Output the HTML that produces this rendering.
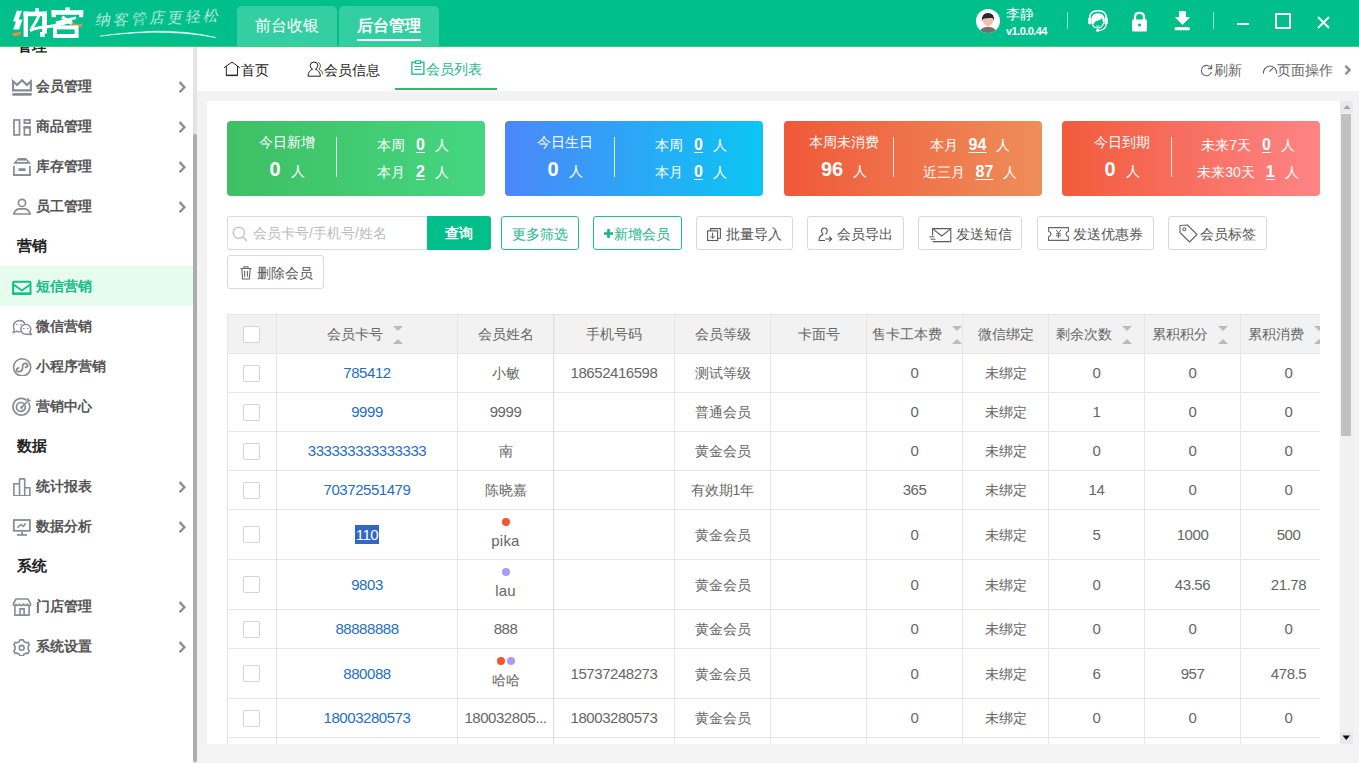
<!DOCTYPE html>
<html><head><meta charset="utf-8">
<style>
*{margin:0;padding:0;box-sizing:border-box}
html,body{width:1359px;height:763px;overflow:hidden;background:#f3f3f3;font-family:"Liberation Sans",sans-serif;font-size:14px;color:#666}
.a{position:absolute;white-space:nowrap}
#hdr{position:absolute;left:0;top:0;width:1359px;height:47px;background:#00bf8a;border-bottom:1px solid #3ccf6c}
.htab{position:absolute;top:6px;width:100px;height:40px;background:#33cfa2;border-radius:5px 5px 0 0;color:#fff;font-size:16px;line-height:40px;text-align:center}
#side{position:absolute;left:0;top:47px;width:193px;height:716px;background:#fff;overflow:hidden}
.sec{position:absolute;left:17px;font-size:15px;font-weight:bold;color:#222;line-height:20px}
.mi{position:absolute;left:0;width:193px;height:40px}
.mi .t{position:absolute;left:36px;top:0;line-height:40px;font-weight:bold;color:#555;font-size:14px}
.mi svg.ic{position:absolute;left:12px;top:10px}
.mi svg.ch{position:absolute;left:178px;top:15px}
#sbtrack{position:absolute;left:193px;top:47px;width:4px;height:716px;background:#e3e3e3}
#sbthumb{position:absolute;left:193px;top:134px;width:4px;height:628px;background:#adadad;border-radius:2px}
#tabbar{position:absolute;left:197px;top:47px;width:1162px;height:44px;background:#fff}
#panel{position:absolute;left:207px;top:101px;width:1146px;height:643px;background:#fff;overflow:hidden}
.card{position:absolute;top:20px;width:258px;height:75px;border-radius:4px;color:#fff}
.card .tt{position:absolute;top:13px;line-height:16px;font-size:14px;text-align:center}
.card .big{position:absolute;top:37px;line-height:22px;text-align:center}
.card .big b{font-size:20px}
.card .div{position:absolute;left:109px;top:16px;width:1px;height:40px;background:rgba(255,255,255,.85)}
.card .r{position:absolute;line-height:16px;font-size:14px}
.card u{text-underline-offset:2px;font-weight:bold}
.btn{position:absolute;top:115px;height:34px;border:1px solid #d9d9d9;border-radius:3px;background:#fff;color:#555;line-height:32px;font-size:14px}
.btn svg{position:absolute}
.btn span{position:absolute;top:1px}
.gbtn{border-color:#20c08d;color:#19b88a}

.tc{text-align:center;line-height:20px;font-size:14px;white-space:nowrap;overflow:hidden}
.num{font-size:15px;letter-spacing:-0.45px}
.sort{display:inline-block;position:relative;width:10px;height:20px;margin-left:10px;vertical-align:top}
.sort i{position:absolute;left:0;width:0;height:0;border-left:5px solid transparent;border-right:5px solid transparent}
.sort i.dn{top:3px;border-top:5px solid #bbb}
.sort i.up{top:11px;border-bottom:5px solid #bbb}
.dot{display:inline-block;width:8px;height:8px;border-radius:50%;margin:0 1px;vertical-align:top}
.card .r u{display:inline-block;margin:0 10px 0 11px;font-size:16px;text-decoration:underline}
.card .ren{display:inline-block;margin-left:10px;font-size:14px}
</style></head><body>
<div id="hdr">
  
  <svg class="a" style="left:0;top:0" width="95" height="46" viewBox="0 0 95 46">
  <path d="M16.8 10.8 L22 10.8 L18.6 19.4 L22.4 19.4 L19.2 29.4 L13.2 29.4 L16 21.6 L13 21.6 Z" fill="#fff"/>
  <path d="M12.2 33.2 L17 32.5 L21.6 31.8 L20 35 L13.5 36.4 Z" fill="#f0893d"/>
  <rect x="23.6" y="11.6" width="4.4" height="25.4" fill="#fff"/>
  <rect x="23.6" y="11.6" width="23.4" height="4.6" fill="#fff"/>
  <rect x="42.2" y="11.6" width="4.8" height="22" fill="#fff"/>
  <path d="M35.4 8 L39 8 L38.6 16 L35 16 Z" fill="#fff"/>
  <path d="M37.6 15 L33.6 23 L30.4 27.6 L33 29 L37.4 22 L40 16.4 Z" fill="#fff"/>
  <path d="M30 30.5 Q36 27.5 46 27 Q58 25.5 72 20.8" fill="none" stroke="#fff" stroke-width="3.2"/>
  <rect x="40" y="32" width="4.6" height="5" fill="#fff"/>
  <rect x="51.6" y="10.2" width="31.6" height="4.6" fill="#fff"/>
  <rect x="51.6" y="10.2" width="4.2" height="7" fill="#fff"/>
  <rect x="79" y="10.2" width="4.2" height="7" fill="#fff"/>
  <rect x="65.4" y="7.4" width="4.4" height="4" fill="#fff"/>
  <path d="M55.4 21.4 L75.6 16.4 L76.4 19 L56.8 24 Z" fill="#fff"/>
  <path d="M62 17 L72 23.6" fill="none" stroke="#fff" stroke-width="3.4"/>
  <path d="M71 22.2 L78 24.4 L83 23.6 L81.6 26.8 L73.6 25.8 Z" fill="#f0893d"/>
  <rect x="55" y="27.4" width="21.6" height="8.6" fill="none" stroke="#fff" stroke-width="4"/>
</svg>
  <div class="a" style="left:96px;top:8px;font-size:15px;line-height:20px;color:#fff;letter-spacing:3px;transform:skewX(-12deg) rotate(-2deg);-webkit-text-stroke:0.3px #00bf8a">纳客管店更轻松</div>
  <svg class="a" style="left:98px;top:28px" width="125" height="12" viewBox="0 0 125 12"><path d="M2 8.2 Q20 5 55 3.2 Q90 2.5 118 9.6 Q90 4.2 55 4.2 Q25 5 2 8.2 Z" fill="#fff" stroke="#fff" stroke-width="0.5"/></svg>
  <svg class="a" style="left:976px;top:9px" width="24" height="24" viewBox="0 0 24 24"><defs><clipPath id="avc"><circle cx="12" cy="12" r="12"/></clipPath></defs><circle cx="12" cy="12" r="12" fill="#fff"/><g clip-path="url(#avc)"><path d="M3.5 24 Q4.2 18.6 10.5 18 L13.5 18 Q19.8 18.6 20.5 24 Z" fill="#707070"/><path d="M7 11.5 Q7 8.5 12 8.5 Q17 8.5 17 11.5 Q17 15.5 12 17.8 Q7 15.5 7 11.5 Z" fill="#f2c0ad"/><path d="M5.9 12.2 Q5.2 4 12 3.9 Q18.8 4 17.9 12 Q17.2 9.2 16 9 Q12 8.6 8.2 9.6 Q6.8 10 5.9 12.2 Z" fill="#2a2a2a"/></g></svg>
  <div class="a" style="left:1006px;top:5px;font-size:14px;line-height:18px;color:#fff">李静</div>
  <div class="a" style="left:1006px;top:24px;font-size:11px;line-height:14px;color:#fff;font-weight:bold;letter-spacing:-0.55px">v1.0.0.44</div>
  <div class="a" style="left:1067px;top:12px;width:1px;height:17px;background:rgba(255,255,255,.55)"></div>
  <svg class="a" style="left:1087px;top:10px" width="22" height="22" viewBox="0 0 22 22"><path d="M2.6 8.5 Q2.6 0.8 11 0.8 Q19.4 0.8 19.4 8.5" fill="none" stroke="#fff" stroke-width="1.5"/><rect x="1.2" y="7.6" width="3.4" height="6.6" rx="1" fill="#fff"/><rect x="17.4" y="7.6" width="3.4" height="6.6" rx="1" fill="#fff"/><path d="M4.6 13.5 L4.6 9.5 Q4.6 3.2 11 3.2 Q17.4 3.2 17.4 9.5 L17.4 12.5 L16 12.5 Q15.6 9.8 14.6 8 Q13.8 10 11 10.6 Q7.6 11.2 6.6 14.2 Z" fill="#fff"/><path d="M5.2 14 Q6.5 17.8 11 18 Q15 17.8 16.6 13" fill="none" stroke="#fff" stroke-width="1.1"/><path d="M9.3 15.8 Q10.8 16.6 12.4 15.8" fill="none" stroke="#fff" stroke-width="0.9"/><path d="M19.2 14 Q18.8 20.3 11.5 20.4" fill="none" stroke="#fff" stroke-width="1.3"/><circle cx="10.6" cy="20.3" r="1.6" fill="#fff"/></svg>
  <svg class="a" style="left:1131px;top:11px" width="17" height="21" viewBox="0 0 17 21"><path d="M4 9 L4 6 Q4 1.8 8.5 1.8 Q13 1.8 13 6 L13 9" fill="none" stroke="#fff" stroke-width="2.3"/><rect x="1" y="8.5" width="15" height="12" rx="1.3" fill="#fff"/><circle cx="8.5" cy="14" r="1.6" fill="#00bf8a"/></svg>
  <svg class="a" style="left:1174px;top:11px" width="17" height="20" viewBox="0 0 17 20"><path d="M5.5 0.5 L11.5 0.5 L11.5 6.5 L15.5 6.5 L8.5 13.5 L1.5 6.5 L5.5 6.5 Z" fill="#fff" stroke="#fff" stroke-width="0.8" stroke-linejoin="round"/><rect x="0.5" y="16.2" width="15.5" height="3" rx="1.4" fill="#fff"/></svg>
  <div class="a" style="left:1213px;top:12px;width:1px;height:17px;background:rgba(255,255,255,.55)"></div>
  <div class="a" style="left:1237px;top:23px;width:12px;height:2px;background:#fff"></div>
  <div class="a" style="left:1275px;top:13px;width:16px;height:16px;border:2px solid #fff"></div>
  <svg class="a" style="left:1317px;top:16px" width="13" height="13" viewBox="0 0 13 13"><path d="M1 1 L12 12 M12 1 L1 12" stroke="#fff" stroke-width="1.9"/></svg>
  <div class="htab" style="left:237px">前台收银</div>
  <div class="htab" style="left:339px;font-weight:bold">后台管理<div style="position:absolute;left:18px;top:33px;width:64px;height:2px;background:#fff"></div></div>
</div>
<div id="side">
<div class="sec" style="top:-11px">管理</div>
<div class="mi" style="top:19px"><svg class="ic" width="20" height="20" viewBox="0 0 20 20"><path d="M1.1 5.3 L5.1 9 L10 4.2 L14.9 9 L18.9 5.3 L18.9 14.4 L1.1 14.4 Z" fill="none" stroke="#8a8a97" stroke-width="2.1" stroke-linejoin="miter"/><rect x="0.1" y="17.1" width="19.8" height="2.7" rx="1.35" fill="#8a8a97"/></svg><div class="t">会员管理</div><svg class="ch" width="9" height="12" viewBox="0 0 9 12"><path d="M1.6 1.1 L6.4 6.2 L1.6 11.2" fill="none" stroke="#8a8a97" stroke-width="2.3"/></svg></div>
<div class="mi" style="top:59px"><svg class="ic" width="20" height="20" viewBox="0 0 20 20"><rect x="1.95" y="3.95" width="5.6" height="15" fill="none" stroke="#8a8a97" stroke-width="1.7"/><rect x="12.35" y="3.95" width="5.6" height="3.2" fill="none" stroke="#8a8a97" stroke-width="1.8"/><rect x="12.35" y="11.3" width="5.6" height="7.65" fill="none" stroke="#8a8a97" stroke-width="1.7"/><rect x="11.5" y="10.1" width="7.3" height="2.4" fill="#8a8a97"/></svg><div class="t">商品管理</div><svg class="ch" width="9" height="12" viewBox="0 0 9 12"><path d="M1.6 1.1 L6.4 6.2 L1.6 11.2" fill="none" stroke="#8a8a97" stroke-width="2.3"/></svg></div>
<div class="mi" style="top:99px"><svg class="ic" width="20" height="20" viewBox="0 0 20 20"><path d="M6.3 2 L14 2 L19 7.8 L1 7.8 Z" fill="#8a8a97"/><rect x="4.8" y="4.6" width="10.3" height="1.3" fill="#fff"/><path d="M1.9 10.1 L1.9 19.45 L17.9 19.45 L17.9 10.1" fill="none" stroke="#8a8a97" stroke-width="1.7"/><rect x="1" y="18.2" width="17.8" height="2.5" fill="#8a8a97"/><path d="M6.1 13.55 L7 12.2 L13.1 12.2 L14 13.55 L13.1 14.9 L7 14.9 Z" fill="#8a8a97"/></svg><div class="t">库存管理</div><svg class="ch" width="9" height="12" viewBox="0 0 9 12"><path d="M1.6 1.1 L6.4 6.2 L1.6 11.2" fill="none" stroke="#8a8a97" stroke-width="2.3"/></svg></div>
<div class="mi" style="top:139px"><svg class="ic" width="20" height="20" viewBox="0 0 20 20"><circle cx="10" cy="6.9" r="3.6" fill="none" stroke="#8a8a97" stroke-width="1.7"/><path d="M6.4 12.9 L13.6 12.9 Q15.6 13.3 16.8 15.2 L18.3 18 L1.7 18 L3.2 15.2 Q4.4 13.3 6.4 12.9 Z" fill="none" stroke="#8a8a97" stroke-width="1.7" stroke-linejoin="round"/></svg><div class="t">员工管理</div><svg class="ch" width="9" height="12" viewBox="0 0 9 12"><path d="M1.6 1.1 L6.4 6.2 L1.6 11.2" fill="none" stroke="#8a8a97" stroke-width="2.3"/></svg></div>
<div class="sec" style="top:189px">营销</div>
<div class="mi" style="top:219px;background:#e6fcee"><svg class="ic" width="20" height="20" viewBox="0 0 20 20"><rect x="1.1" y="5.7" width="17.4" height="12.1" rx="0.8" fill="none" stroke="#0fbf87" stroke-width="1.9"/><rect x="0.1" y="16.6" width="19.4" height="2.2" rx="0.8" fill="#0fbf87"/><path d="M1.4 8.6 L9.9 14.4 L18.4 8.6" fill="none" stroke="#0fbf87" stroke-width="1.8"/></svg><div class="t" style="color:#12bd86">短信营销</div></div>
<div class="mi" style="top:259px"><svg class="ic" width="20" height="20" viewBox="0 0 20 20"><path d="M12.9 7.6 A6.1 5.9 0 0 0 1.5 10 Q1.5 12.5 2.2 13.6 L1.2 16.7 L4.3 15.3 Q6 15.9 8.2 15.6" fill="none" stroke="#8a8a97" stroke-width="1.45" stroke-linejoin="round"/><rect x="4" y="7.9" width="1.5" height="1" fill="#8a8a97"/><rect x="8" y="7.9" width="1.5" height="1" fill="#8a8a97"/><path d="M17.8 16.2 A4.95 4.95 0 1 0 14.3 18.2 L19.5 18.5 Z" fill="none" stroke="#8a8a97" stroke-width="1.45" stroke-linejoin="round"/><rect x="11" y="12" width="1.5" height="1" fill="#8a8a97"/><rect x="15" y="12" width="1.5" height="1" fill="#8a8a97"/></svg><div class="t">微信营销</div></div>
<div class="mi" style="top:299px"><svg class="ic" width="20" height="20" viewBox="0 0 20 20"><circle cx="10.15" cy="11.3" r="8.6" fill="none" stroke="#8a8a97" stroke-width="1.6"/><path d="M7.3 11.6 C5.4 12 4.6 13 4.6 14 C4.7 15.2 5.7 15.7 6.8 15.7 C8.9 15.7 10.3 14.6 10.5 12.5 L10.6 10 C10.8 8 12 7.3 13.2 7.3 C14.6 7.3 15.6 8.2 15.6 9.4 C15.6 10.5 14.6 11.3 12.8 11.4" fill="none" stroke="#8a8a97" stroke-width="1.8"/></svg><div class="t">小程序营销</div></div>
<div class="mi" style="top:339px"><svg class="ic" width="20" height="20" viewBox="0 0 20 20"><path d="M14.8 4.4 A8.35 8.35 0 1 0 16.6 6.6" fill="none" stroke="#8a8a97" stroke-width="1.7"/><path d="M12.4 8.3 A4.45 4.45 0 1 0 13 9.4" fill="none" stroke="#8a8a97" stroke-width="1.7"/><rect x="8.3" y="10.2" width="2.6" height="2.5" fill="#8a8a97"/><path d="M9.6 11.4 L16.8 4.2" stroke="#8a8a97" stroke-width="1.6"/><path d="M15.8 2 L16.2 4.4 L18.6 4.6" fill="none" stroke="#8a8a97" stroke-width="1.6"/></svg><div class="t">营销中心</div></div>
<div class="sec" style="top:389px">数据</div>
<div class="mi" style="top:419px"><svg class="ic" width="20" height="20" viewBox="0 0 20 20"><path d="M1.9 19.9 L1.9 7.8 L7.5 7.8 M7.5 19.9 L7.5 3.4 Q7.5 2.9 8.2 2.9 L12 2.9 Q12.7 2.9 12.7 3.4 L12.7 19.9 M12.7 11.7 L17.9 11.7 L17.9 19.9" fill="none" stroke="#8a8a97" stroke-width="1.6"/><rect x="1.1" y="19" width="17.6" height="1.7" rx="0.5" fill="#8a8a97"/></svg><div class="t">统计报表</div><svg class="ch" width="9" height="12" viewBox="0 0 9 12"><path d="M1.6 1.1 L6.4 6.2 L1.6 11.2" fill="none" stroke="#8a8a97" stroke-width="2.3"/></svg></div>
<div class="mi" style="top:459px"><svg class="ic" width="20" height="20" viewBox="0 0 20 20"><rect x="1.8" y="4" width="16.1" height="10.8" fill="none" stroke="#8a8a97" stroke-width="1.8"/><rect x="9.2" y="15.5" width="1.8" height="2.8" fill="#8a8a97"/><rect x="4.9" y="18.1" width="10.2" height="1.7" fill="#8a8a97"/><path d="M5.4 11.6 L9 8.5 L11.3 10.5 L13.7 7.2" fill="none" stroke="#8a8a97" stroke-width="1.5"/></svg><div class="t">数据分析</div><svg class="ch" width="9" height="12" viewBox="0 0 9 12"><path d="M1.6 1.1 L6.4 6.2 L1.6 11.2" fill="none" stroke="#8a8a97" stroke-width="2.3"/></svg></div>
<div class="sec" style="top:509px">系统</div>
<div class="mi" style="top:539px"><svg class="ic" width="20" height="20" viewBox="0 0 20 20"><path d="M4 3 L16.1 3 L18.6 8.2 Q18.6 9.6 17 9.6 Q15.6 9.6 15.3 8 Q14.6 9.8 13 9.4 Q12 9 11.6 8 Q10.6 9.8 8.4 9.4 Q7.6 9 7.4 8 Q6.8 9.6 5 9.5 Q4.2 9.2 4 8.2 Q3.4 9.6 2.2 9.4 Q1.3 9.2 1.3 8 Z" fill="none" stroke="#8a8a97" stroke-width="1.6" stroke-linejoin="round"/><path d="M2.9 9.6 L2.9 19.1 L17.1 19.1 L17.1 9.6" fill="none" stroke="#8a8a97" stroke-width="1.6"/><path d="M8 19 L8 12.9 L12.1 12.9 L12.1 19" fill="none" stroke="#8a8a97" stroke-width="1.6"/></svg><div class="t">门店管理</div><svg class="ch" width="9" height="12" viewBox="0 0 9 12"><path d="M1.6 1.1 L6.4 6.2 L1.6 11.2" fill="none" stroke="#8a8a97" stroke-width="2.3"/></svg></div>
<div class="mi" style="top:579px"><svg class="ic" width="20" height="20" viewBox="0 0 20 20"><path d="M8 3.9 L11.2 3.9 L12 5.6 L14 6.7 L16.1 6.4 L17.3 8.6 L16.2 10.3 L16.2 13.5 L17.3 15.2 L16.1 17.4 L14 17.1 L12 18.2 L11.2 19.9 L8 19.9 L7.2 18.2 L5.2 17.1 L3.1 17.4 L1.9 15.2 L3 13.5 L3 10.3 L1.9 8.6 L3.1 6.4 L5.2 6.7 L7.2 5.6 Z" fill="none" stroke="#8a8a97" stroke-width="1.6" stroke-linejoin="round"/><circle cx="9.7" cy="11.8" r="2.4" fill="none" stroke="#8a8a97" stroke-width="1.6"/></svg><div class="t">系统设置</div><svg class="ch" width="9" height="12" viewBox="0 0 9 12"><path d="M1.6 1.1 L6.4 6.2 L1.6 11.2" fill="none" stroke="#8a8a97" stroke-width="2.3"/></svg></div>
</div>
<div id="sbtrack"></div><div id="sbthumb"></div>
<div id="tabbar">
  <svg class="a" style="left:26px;top:14px" width="18" height="16" viewBox="0 0 18 16"><path d="M1 6.8 L9 1 L16.8 6.8" fill="none" stroke="#222" stroke-width="1"/><path d="M3.3 5.2 L3.3 14.4 L14.5 14.4 L14.5 5.2" fill="none" stroke="#222" stroke-width="1"/><path d="M3.3 14.4 L14.5 14.4" stroke="#222" stroke-width="1.4"/></svg>
  <div class="a" style="left:44px;top:15px;line-height:16px;color:#222">首页</div>
  <svg class="a" style="left:110px;top:14px" width="17" height="16" viewBox="0 0 17 16"><path d="M5.6 8.2 Q3.2 7 3.2 4.6 Q3.2 1 7 1 Q10.8 1 10.8 4.6 Q10.8 7 8.4 8.2 Q13 9.8 13.4 15.2 L1 15.2 Q1.2 9.8 5.6 8.2 Z" fill="none" stroke="#222" stroke-width="1"/><path d="M11.2 1.2 Q13.6 2.4 13.4 5.2 Q13.2 7.2 12 8.2 Q15.4 9.6 16 13.4" fill="none" stroke="#444" stroke-width="0.9"/></svg>
  <div class="a" style="left:127px;top:15px;line-height:16px;color:#222">会员信息</div>
  <svg class="a" style="left:214px;top:13px" width="14" height="15" viewBox="0 0 14 15"><rect x="0.9" y="2.2" width="12" height="12" fill="none" stroke="#18bb8a" stroke-width="1.3"/><rect x="4.5" y="0.8" width="5" height="2.6" fill="#fff" stroke="#18bb8a" stroke-width="1.1"/><path d="M3.6 6.5 L10.2 6.5 M3.6 9.5 L10.2 9.5" stroke="#18bb8a" stroke-width="1.1"/></svg>
  <div class="a" style="left:229px;top:14px;line-height:16px;color:#18bb8a">会员列表</div>
  <div class="a" style="left:198px;top:41px;width:102px;height:2px;background:#2fbd5c"></div>
  <svg class="a" style="left:1003px;top:17px" width="13" height="13" viewBox="0 0 13 13"><path d="M11.2 4.2 A5.2 5.2 0 1 0 11.5 8.2" fill="none" stroke="#666" stroke-width="1.1"/><path d="M11.6 0.8 L11.6 4.6 L7.8 4.6" fill="none" stroke="#666" stroke-width="1.1"/></svg>
  <div class="a" style="left:1017px;top:15px;line-height:16px;color:#666">刷新</div>
  <svg class="a" style="left:1065px;top:16px" width="16" height="13" viewBox="0 0 16 13"><path d="M1.6 10.6 A6.5 6.5 0 1 1 14.4 10.6" fill="none" stroke="#555" stroke-width="1.05"/><path d="M7.4 8.6 L10.9 5.2" stroke="#555" stroke-width="1.1"/></svg>
  <div class="a" style="left:1080px;top:15px;line-height:16px;color:#666">页面操作</div>
  <svg class="a" style="left:1147px;top:18px" width="9" height="11" viewBox="0 0 9 11"><path d="M1.4 0.9 L5.6 5.1 L1.4 9.3" fill="none" stroke="#8a8a97" stroke-width="2.3"/></svg>
</div>
<div id="panel">
<div class="card" style="left:20px;background:linear-gradient(90deg,#3ebf63,#45d681)"><div class="tt" style="left:0;width:119px">今日新增</div><div class="big" style="left:0;width:120px"><b>0</b><span class="ren">人</span></div><div class="div"></div><div class="r" style="left:110px;width:152px;top:16px;text-align:center">本周<u>0</u>人</div><div class="r" style="left:110px;width:152px;top:43px;text-align:center">本月<u>2</u>人</div></div>
<div class="card" style="left:298px;background:linear-gradient(90deg,#4c87f9,#0bc6f3)"><div class="tt" style="left:0;width:119px">今日生日</div><div class="big" style="left:0;width:120px"><b>0</b><span class="ren">人</span></div><div class="div"></div><div class="r" style="left:110px;width:152px;top:16px;text-align:center">本周<u>0</u>人</div><div class="r" style="left:110px;width:152px;top:43px;text-align:center">本月<u>0</u>人</div></div>
<div class="card" style="left:577px;background:linear-gradient(90deg,#f0583a,#ee8e5a)"><div class="tt" style="left:0;width:119px">本周未消费</div><div class="big" style="left:0;width:120px"><b>96</b><span class="ren">人</span></div><div class="div"></div><div class="r" style="left:110px;width:152px;top:16px;text-align:center">本月<u>94</u>人</div><div class="r" style="left:110px;width:152px;top:43px;text-align:center">近三月<u>87</u>人</div></div>
<div class="card" style="left:855px;background:linear-gradient(90deg,#f25b3b,#fe8487)"><div class="tt" style="left:0;width:119px">今日到期</div><div class="big" style="left:0;width:120px"><b>0</b><span class="ren">人</span></div><div class="div"></div><div class="r" style="left:110px;width:152px;top:16px;text-align:center">未来7天<u>0</u>人</div><div class="r" style="left:110px;width:152px;top:43px;text-align:center">未来30天<u>1</u>人</div></div>
<div class="a" style="left:20px;top:115px;width:201px;height:34px;border:1px solid #dcdcdc;border-right:none;border-radius:3px 0 0 3px;background:#fff"></div>
<svg class="a" style="left:25px;top:125px" width="16" height="16" viewBox="0 0 16 16"><circle cx="6.8" cy="6.8" r="5.6" fill="none" stroke="#c8c8c8" stroke-width="1.5"/><path d="M10.8 10.8 L14.8 14.8" stroke="#c8c8c8" stroke-width="1.8"/></svg>
<div class="a" style="left:46px;top:124px;line-height:16px;color:#bbb">会员卡号/手机号/姓名</div>
<div class="a" style="left:220px;top:115px;width:64px;height:34px;background:#00bf8a;border-radius:0 3px 3px 0;color:#fff;font-weight:bold;text-align:center;line-height:34px">查询</div>
<div class="btn gbtn" style="left:294px;width:78px"><span style="left:10px">更多筛选</span></div>
<div class="btn gbtn" style="left:386px;width:89px"><svg style="left:10px;top:12px" width="9" height="9" viewBox="0 0 9 9"><path d="M0 4.5 L9 4.5 M4.5 0 L4.5 9" stroke="#13b886" stroke-width="2.6"/></svg><span style="left:20px">新增会员</span></div>
<div class="btn" style="left:489px;width:97px"><svg style="left:10px;top:11px" width="14" height="14" viewBox="0 0 14 14"><path d="M3.5 2.8 L3.5 0.6 L13.4 0.6 L13.4 10.2 L10.6 10.2" fill="none" stroke="#5a5a5a" stroke-width="1.1"/><rect x="0.6" y="2.9" width="10" height="9.6" fill="none" stroke="#5a5a5a" stroke-width="1.1"/><path d="M5.6 4.6 L5.6 10.2 M3.4 8 L5.6 10.2 L7.8 8" fill="none" stroke="#5a5a5a" stroke-width="1"/></svg><span style="left:29px">批量导入</span></div>
<div class="btn" style="left:600px;width:97px"><svg style="left:10px;top:10px" width="15" height="15" viewBox="0 0 15 15"><path d="M5.2 7.4 Q3.6 6.2 3.6 3.8 Q3.6 1 6.4 1 Q9.2 1 9.2 3.8 Q9.2 6 7.6 7.4" fill="none" stroke="#555" stroke-width="1.1"/><path d="M5.2 7.6 Q1.2 8.6 1 13.5 L7 13.5" fill="none" stroke="#555" stroke-width="1.1"/><path d="M7.4 12 L13.6 12 M11.2 9.6 L13.6 12 L11.2 14.4" fill="none" stroke="#555" stroke-width="1.1"/></svg><span style="left:29px">会员导出</span></div>
<div class="btn" style="left:711px;width:104px"><svg style="left:10px;top:11px" width="23" height="15" viewBox="0 0 23 15"><path d="M3.6 7.6 L3.6 0.6 L21.8 0.6 L21.8 13.6 L3.6 13.6" fill="none" stroke="#5a5a5a" stroke-width="1.1"/><path d="M3.8 0.9 L12.7 8 L21.6 0.9" fill="none" stroke="#5a5a5a" stroke-width="1.1"/><path d="M0.6 8.8 L5.2 8.8 M1.6 11.2 L6.4 11.2" stroke="#5a5a5a" stroke-width="1"/></svg><span style="left:37px">发送短信</span></div>
<div class="btn" style="left:830px;width:117px"><svg style="left:10px;top:10px" width="21" height="14" viewBox="0 0 21 14"><path d="M0.6 0.6 L20.4 0.6 L20.4 4.2 Q18 5 18 7 Q18 9 20.4 9.8 L20.4 13.4 L0.6 13.4 L0.6 9.8 Q3 9 3 7 Q3 5 0.6 4.2 Z" fill="none" stroke="#666" stroke-width="1.1"/><path d="M8.2 3 L10.5 6 L12.8 3 M10.5 6 L10.5 11 M8 6.8 L13 6.8 M8 8.8 L13 8.8" fill="none" stroke="#666" stroke-width="1"/></svg><span style="left:35px">发送优惠券</span></div>
<div class="btn" style="left:961px;width:99px"><svg style="left:10px;top:7px" width="19" height="19" viewBox="0 0 19 19"><path d="M1 1.5 L8.5 1 L18 10.5 L10.5 18 L1 8.5 Z" fill="none" stroke="#666" stroke-width="1.1" stroke-linejoin="round"/><circle cx="5.3" cy="5.3" r="1.5" fill="none" stroke="#666" stroke-width="1.1"/></svg><span style="left:31px">会员标签</span></div>
<div class="btn" style="left:20px;top:154px;width:97px"><svg style="left:12px;top:10px" width="12" height="14" viewBox="0 0 12 14"><path d="M0.5 2.5 L11.5 2.5 M4 2.5 L4 0.8 L8 0.8 L8 2.5 M1.8 2.5 L2.6 13 L9.4 13 L10.2 2.5 M4.6 5 L4.6 10.8 M7.4 5 L7.4 10.8" fill="none" stroke="#666" stroke-width="1.1"/></svg><span style="left:29px">删除会员</span></div>


<div class="a" style="left:20px;top:213px;width:1093px;height:39px;background:#f2f2f2"></div>
<div class="a" style="left:20px;top:213px;width:1093px;height:1px;background:#e6e6e6"></div>
<div class="a" style="left:20px;top:252px;width:1093px;height:1px;background:#e6e6e6"></div>
<div class="a" style="left:20px;top:291px;width:1093px;height:1px;background:#e6e6e6"></div>
<div class="a" style="left:20px;top:330px;width:1093px;height:1px;background:#e6e6e6"></div>
<div class="a" style="left:20px;top:369px;width:1093px;height:1px;background:#e6e6e6"></div>
<div class="a" style="left:20px;top:408px;width:1093px;height:1px;background:#e6e6e6"></div>
<div class="a" style="left:20px;top:458px;width:1093px;height:1px;background:#e6e6e6"></div>
<div class="a" style="left:20px;top:508px;width:1093px;height:1px;background:#e6e6e6"></div>
<div class="a" style="left:20px;top:547px;width:1093px;height:1px;background:#e6e6e6"></div>
<div class="a" style="left:20px;top:597px;width:1093px;height:1px;background:#e6e6e6"></div>
<div class="a" style="left:20px;top:636px;width:1093px;height:1px;background:#e6e6e6"></div>
<div class="a" style="left:20px;top:675px;width:1093px;height:1px;background:#e6e6e6"></div>
<div class="a" style="left:20px;top:213px;width:1px;height:430px;background:#e6e6e6"></div>
<div class="a" style="left:69px;top:213px;width:1px;height:430px;background:#e6e6e6"></div>
<div class="a" style="left:250px;top:213px;width:1px;height:430px;background:#e6e6e6"></div>
<div class="a" style="left:346px;top:213px;width:1px;height:430px;background:#e6e6e6"></div>
<div class="a" style="left:467px;top:213px;width:1px;height:430px;background:#e6e6e6"></div>
<div class="a" style="left:563px;top:213px;width:1px;height:430px;background:#e6e6e6"></div>
<div class="a" style="left:659px;top:213px;width:1px;height:430px;background:#e6e6e6"></div>
<div class="a" style="left:755px;top:213px;width:1px;height:430px;background:#e6e6e6"></div>
<div class="a" style="left:841px;top:213px;width:1px;height:430px;background:#e6e6e6"></div>
<div class="a" style="left:937px;top:213px;width:1px;height:430px;background:#e6e6e6"></div>
<div class="a" style="left:1033px;top:213px;width:1px;height:430px;background:#e6e6e6"></div>
<div class="a" style="left:346px;top:213px;width:3px;height:430px;background:linear-gradient(90deg,rgba(0,0,0,.04),rgba(0,0,0,0))"></div>
<div class="a" style="left:36px;top:225px;width:17px;height:17px;border:1px solid #d4d4d4;border-radius:2px;background:#fff"></div>
<div class="a" style="left:36px;top:264px;width:17px;height:17px;border:1px solid #d4d4d4;border-radius:2px;background:#fff"></div>
<div class="a" style="left:36px;top:303px;width:17px;height:17px;border:1px solid #d4d4d4;border-radius:2px;background:#fff"></div>
<div class="a" style="left:36px;top:342px;width:17px;height:17px;border:1px solid #d4d4d4;border-radius:2px;background:#fff"></div>
<div class="a" style="left:36px;top:381px;width:17px;height:17px;border:1px solid #d4d4d4;border-radius:2px;background:#fff"></div>
<div class="a" style="left:36px;top:425px;width:17px;height:17px;border:1px solid #d4d4d4;border-radius:2px;background:#fff"></div>
<div class="a" style="left:36px;top:475px;width:17px;height:17px;border:1px solid #d4d4d4;border-radius:2px;background:#fff"></div>
<div class="a" style="left:36px;top:520px;width:17px;height:17px;border:1px solid #d4d4d4;border-radius:2px;background:#fff"></div>
<div class="a" style="left:36px;top:564px;width:17px;height:17px;border:1px solid #d4d4d4;border-radius:2px;background:#fff"></div>
<div class="a" style="left:36px;top:609px;width:17px;height:17px;border:1px solid #d4d4d4;border-radius:2px;background:#fff"></div>
<div class="a" style="left:36px;top:648px;width:17px;height:17px;border:1px solid #d4d4d4;border-radius:2px;background:#fff"></div>
<div class="a tc" style="left:120px;top:223px;text-align:left">会员卡号</div>
<div class="a" style="left:186px;top:225px;width:0;height:0;border-left:5px solid transparent;border-right:5px solid transparent;border-top:5px solid #bbb"></div>
<div class="a" style="left:186px;top:238px;width:0;height:0;border-left:5px solid transparent;border-right:5px solid transparent;border-bottom:5px solid #bbb"></div>
<div class="a tc" style="left:251px;width:95px;top:223px;color:#666;">会员姓名</div>
<div class="a tc" style="left:347px;width:120px;top:223px;color:#666;">手机号码</div>
<div class="a tc" style="left:468px;width:95px;top:223px;color:#666;">会员等级</div>
<div class="a tc" style="left:564px;width:95px;top:223px;color:#666;">卡面号</div>
<div class="a tc" style="left:665px;top:223px;text-align:left">售卡工本费</div>
<div class="a" style="left:745px;top:225px;width:0;height:0;border-left:5px solid transparent;border-right:5px solid transparent;border-top:5px solid #bbb"></div>
<div class="a" style="left:745px;top:238px;width:0;height:0;border-left:5px solid transparent;border-right:5px solid transparent;border-bottom:5px solid #bbb"></div>
<div class="a tc" style="left:756px;width:85px;top:223px;color:#666;">微信绑定</div>
<div class="a tc" style="left:849px;top:223px;text-align:left">剩余次数</div>
<div class="a" style="left:915px;top:225px;width:0;height:0;border-left:5px solid transparent;border-right:5px solid transparent;border-top:5px solid #bbb"></div>
<div class="a" style="left:915px;top:238px;width:0;height:0;border-left:5px solid transparent;border-right:5px solid transparent;border-bottom:5px solid #bbb"></div>
<div class="a tc" style="left:945px;top:223px;text-align:left">累积积分</div>
<div class="a" style="left:1011px;top:225px;width:0;height:0;border-left:5px solid transparent;border-right:5px solid transparent;border-top:5px solid #bbb"></div>
<div class="a" style="left:1011px;top:238px;width:0;height:0;border-left:5px solid transparent;border-right:5px solid transparent;border-bottom:5px solid #bbb"></div>
<div class="a tc" style="left:1041px;top:223px;text-align:left">累积消费</div>
<div class="a" style="left:1107px;top:225px;width:0;height:0;border-left:5px solid transparent;border-right:5px solid transparent;border-top:5px solid #bbb"></div>
<div class="a" style="left:1107px;top:238px;width:0;height:0;border-left:5px solid transparent;border-right:5px solid transparent;border-bottom:5px solid #bbb"></div>
<div class="a tc num" style="left:70px;width:180px;top:262px;color:#1f6ec7;">785412</div>
<div class="a tc" style="left:251px;width:95px;top:262px;color:#666;">小敏</div>
<div class="a tc num" style="left:347px;width:120px;top:262px;color:#666;">18652416598</div>
<div class="a tc" style="left:468px;width:95px;top:262px;color:#666;">测试等级</div>
<div class="a tc num" style="left:660px;width:95px;top:262px;color:#666;">0</div>
<div class="a tc" style="left:756px;width:85px;top:262px;color:#666;">未绑定</div>
<div class="a tc num" style="left:842px;width:95px;top:262px;color:#666;">0</div>
<div class="a tc num" style="left:938px;width:95px;top:262px;color:#666;">0</div>
<div class="a tc num" style="left:1034px;width:95px;top:262px;color:#666;">0</div>
<div class="a tc num" style="left:70px;width:180px;top:301px;color:#1f6ec7;">9999</div>
<div class="a tc num" style="left:251px;width:95px;top:301px;color:#666;">9999</div>
<div class="a tc" style="left:468px;width:95px;top:301px;color:#666;">普通会员</div>
<div class="a tc num" style="left:660px;width:95px;top:301px;color:#666;">0</div>
<div class="a tc" style="left:756px;width:85px;top:301px;color:#666;">未绑定</div>
<div class="a tc num" style="left:842px;width:95px;top:301px;color:#666;">1</div>
<div class="a tc num" style="left:938px;width:95px;top:301px;color:#666;">0</div>
<div class="a tc num" style="left:1034px;width:95px;top:301px;color:#666;">0</div>
<div class="a tc num" style="left:70px;width:180px;top:340px;color:#1f6ec7;">333333333333333</div>
<div class="a tc" style="left:251px;width:95px;top:340px;color:#666;">南</div>
<div class="a tc" style="left:468px;width:95px;top:340px;color:#666;">黄金会员</div>
<div class="a tc num" style="left:660px;width:95px;top:340px;color:#666;">0</div>
<div class="a tc" style="left:756px;width:85px;top:340px;color:#666;">未绑定</div>
<div class="a tc num" style="left:842px;width:95px;top:340px;color:#666;">0</div>
<div class="a tc num" style="left:938px;width:95px;top:340px;color:#666;">0</div>
<div class="a tc num" style="left:1034px;width:95px;top:340px;color:#666;">0</div>
<div class="a tc num" style="left:70px;width:180px;top:379px;color:#1f6ec7;">70372551479</div>
<div class="a tc" style="left:251px;width:95px;top:379px;color:#666;">陈晓嘉</div>
<div class="a tc" style="left:468px;width:95px;top:379px;color:#666;">有效期1年</div>
<div class="a tc num" style="left:660px;width:95px;top:379px;color:#666;">365</div>
<div class="a tc" style="left:756px;width:85px;top:379px;color:#666;">未绑定</div>
<div class="a tc num" style="left:842px;width:95px;top:379px;color:#666;">14</div>
<div class="a tc num" style="left:938px;width:95px;top:379px;color:#666;">0</div>
<div class="a tc num" style="left:1034px;width:95px;top:379px;color:#666;">0</div>
<div class="a tc num" style="left:70px;width:180px;top:424px;color:#1f6ec7;"><span style="background:#3367c4;color:#fff;padding:2px 1px 1px">110</span></div>
<div class="a" style="left:251px;width:95px;top:417px;height:10px;text-align:center;line-height:10px"><i class="dot" style="background:#f25530"></i></div>
<div class="a tc" style="left:251px;width:95px;top:430px;color:#666;font-size:15px;letter-spacing:0.2px">pika</div>
<div class="a tc" style="left:468px;width:95px;top:424px;color:#666;">黄金会员</div>
<div class="a tc num" style="left:660px;width:95px;top:424px;color:#666;">0</div>
<div class="a tc" style="left:756px;width:85px;top:424px;color:#666;">未绑定</div>
<div class="a tc num" style="left:842px;width:95px;top:424px;color:#666;">5</div>
<div class="a tc num" style="left:938px;width:95px;top:424px;color:#666;">1000</div>
<div class="a tc num" style="left:1034px;width:95px;top:424px;color:#666;">500</div>
<div class="a tc num" style="left:70px;width:180px;top:474px;color:#1f6ec7;">9803</div>
<div class="a" style="left:251px;width:95px;top:467px;height:10px;text-align:center;line-height:10px"><i class="dot" style="background:#ad9af0"></i></div>
<div class="a tc" style="left:251px;width:95px;top:480px;color:#666;font-size:15px;letter-spacing:0.2px">lau</div>
<div class="a tc" style="left:468px;width:95px;top:474px;color:#666;">黄金会员</div>
<div class="a tc num" style="left:660px;width:95px;top:474px;color:#666;">0</div>
<div class="a tc" style="left:756px;width:85px;top:474px;color:#666;">未绑定</div>
<div class="a tc num" style="left:842px;width:95px;top:474px;color:#666;">0</div>
<div class="a tc num" style="left:938px;width:95px;top:474px;color:#666;">43.56</div>
<div class="a tc num" style="left:1034px;width:95px;top:474px;color:#666;">21.78</div>
<div class="a tc num" style="left:70px;width:180px;top:518px;color:#1f6ec7;">88888888</div>
<div class="a tc num" style="left:251px;width:95px;top:518px;color:#666;">888</div>
<div class="a tc" style="left:468px;width:95px;top:518px;color:#666;">黄金会员</div>
<div class="a tc num" style="left:660px;width:95px;top:518px;color:#666;">0</div>
<div class="a tc" style="left:756px;width:85px;top:518px;color:#666;">未绑定</div>
<div class="a tc num" style="left:842px;width:95px;top:518px;color:#666;">0</div>
<div class="a tc num" style="left:938px;width:95px;top:518px;color:#666;">0</div>
<div class="a tc num" style="left:1034px;width:95px;top:518px;color:#666;">0</div>
<div class="a tc num" style="left:70px;width:180px;top:563px;color:#1f6ec7;">880088</div>
<div class="a" style="left:251px;width:95px;top:556px;height:10px;text-align:center;line-height:10px"><i class="dot" style="background:#f25530"></i><i class="dot" style="background:#ad9af0"></i></div>
<div class="a tc" style="left:251px;width:95px;top:569px;color:#666;">哈哈</div>
<div class="a tc num" style="left:347px;width:120px;top:563px;color:#666;">15737248273</div>
<div class="a tc" style="left:468px;width:95px;top:563px;color:#666;">黄金会员</div>
<div class="a tc num" style="left:660px;width:95px;top:563px;color:#666;">0</div>
<div class="a tc" style="left:756px;width:85px;top:563px;color:#666;">未绑定</div>
<div class="a tc num" style="left:842px;width:95px;top:563px;color:#666;">6</div>
<div class="a tc num" style="left:938px;width:95px;top:563px;color:#666;">957</div>
<div class="a tc num" style="left:1034px;width:95px;top:563px;color:#666;">478.5</div>
<div class="a tc num" style="left:70px;width:180px;top:607px;color:#1f6ec7;">18003280573</div>
<div class="a tc num" style="left:251px;width:95px;top:607px;color:#666;">180032805...</div>
<div class="a tc num" style="left:347px;width:120px;top:607px;color:#666;">18003280573</div>
<div class="a tc" style="left:468px;width:95px;top:607px;color:#666;">黄金会员</div>
<div class="a tc num" style="left:660px;width:95px;top:607px;color:#666;">0</div>
<div class="a tc" style="left:756px;width:85px;top:607px;color:#666;">未绑定</div>
<div class="a tc num" style="left:842px;width:95px;top:607px;color:#666;">0</div>
<div class="a tc num" style="left:938px;width:95px;top:607px;color:#666;">0</div>
<div class="a tc num" style="left:1034px;width:95px;top:607px;color:#666;">0</div>
<div class="a" style="left:1113px;top:200px;width:20px;height:443px;background:#fff"></div>
<div class="a" style="left:1133px;top:0;width:13px;height:643px;background:#f1f1f1"></div>
<div class="a" style="left:1133px;top:0;width:13px;height:12px;background:#e9e9ec"></div>
<svg class="a" style="left:1136px;top:3px" width="8" height="6" viewBox="0 0 8 6"><path d="M0.5 5 L4 1 L7.5 5 Z" fill="#a3a3a3"/></svg>
<div class="a" style="left:1134px;top:13px;width:10px;height:322px;background:#c1c1c1"></div>
<div class="a" style="left:1133px;top:631px;width:13px;height:12px;background:#e9e9ec"></div>
<svg class="a" style="left:1135px;top:634px" width="9" height="6" viewBox="0 0 9 6"><path d="M0.5 0.5 L8 0.5 L4.25 5 Z" fill="#111"/></svg>


</div>
</body></html>
